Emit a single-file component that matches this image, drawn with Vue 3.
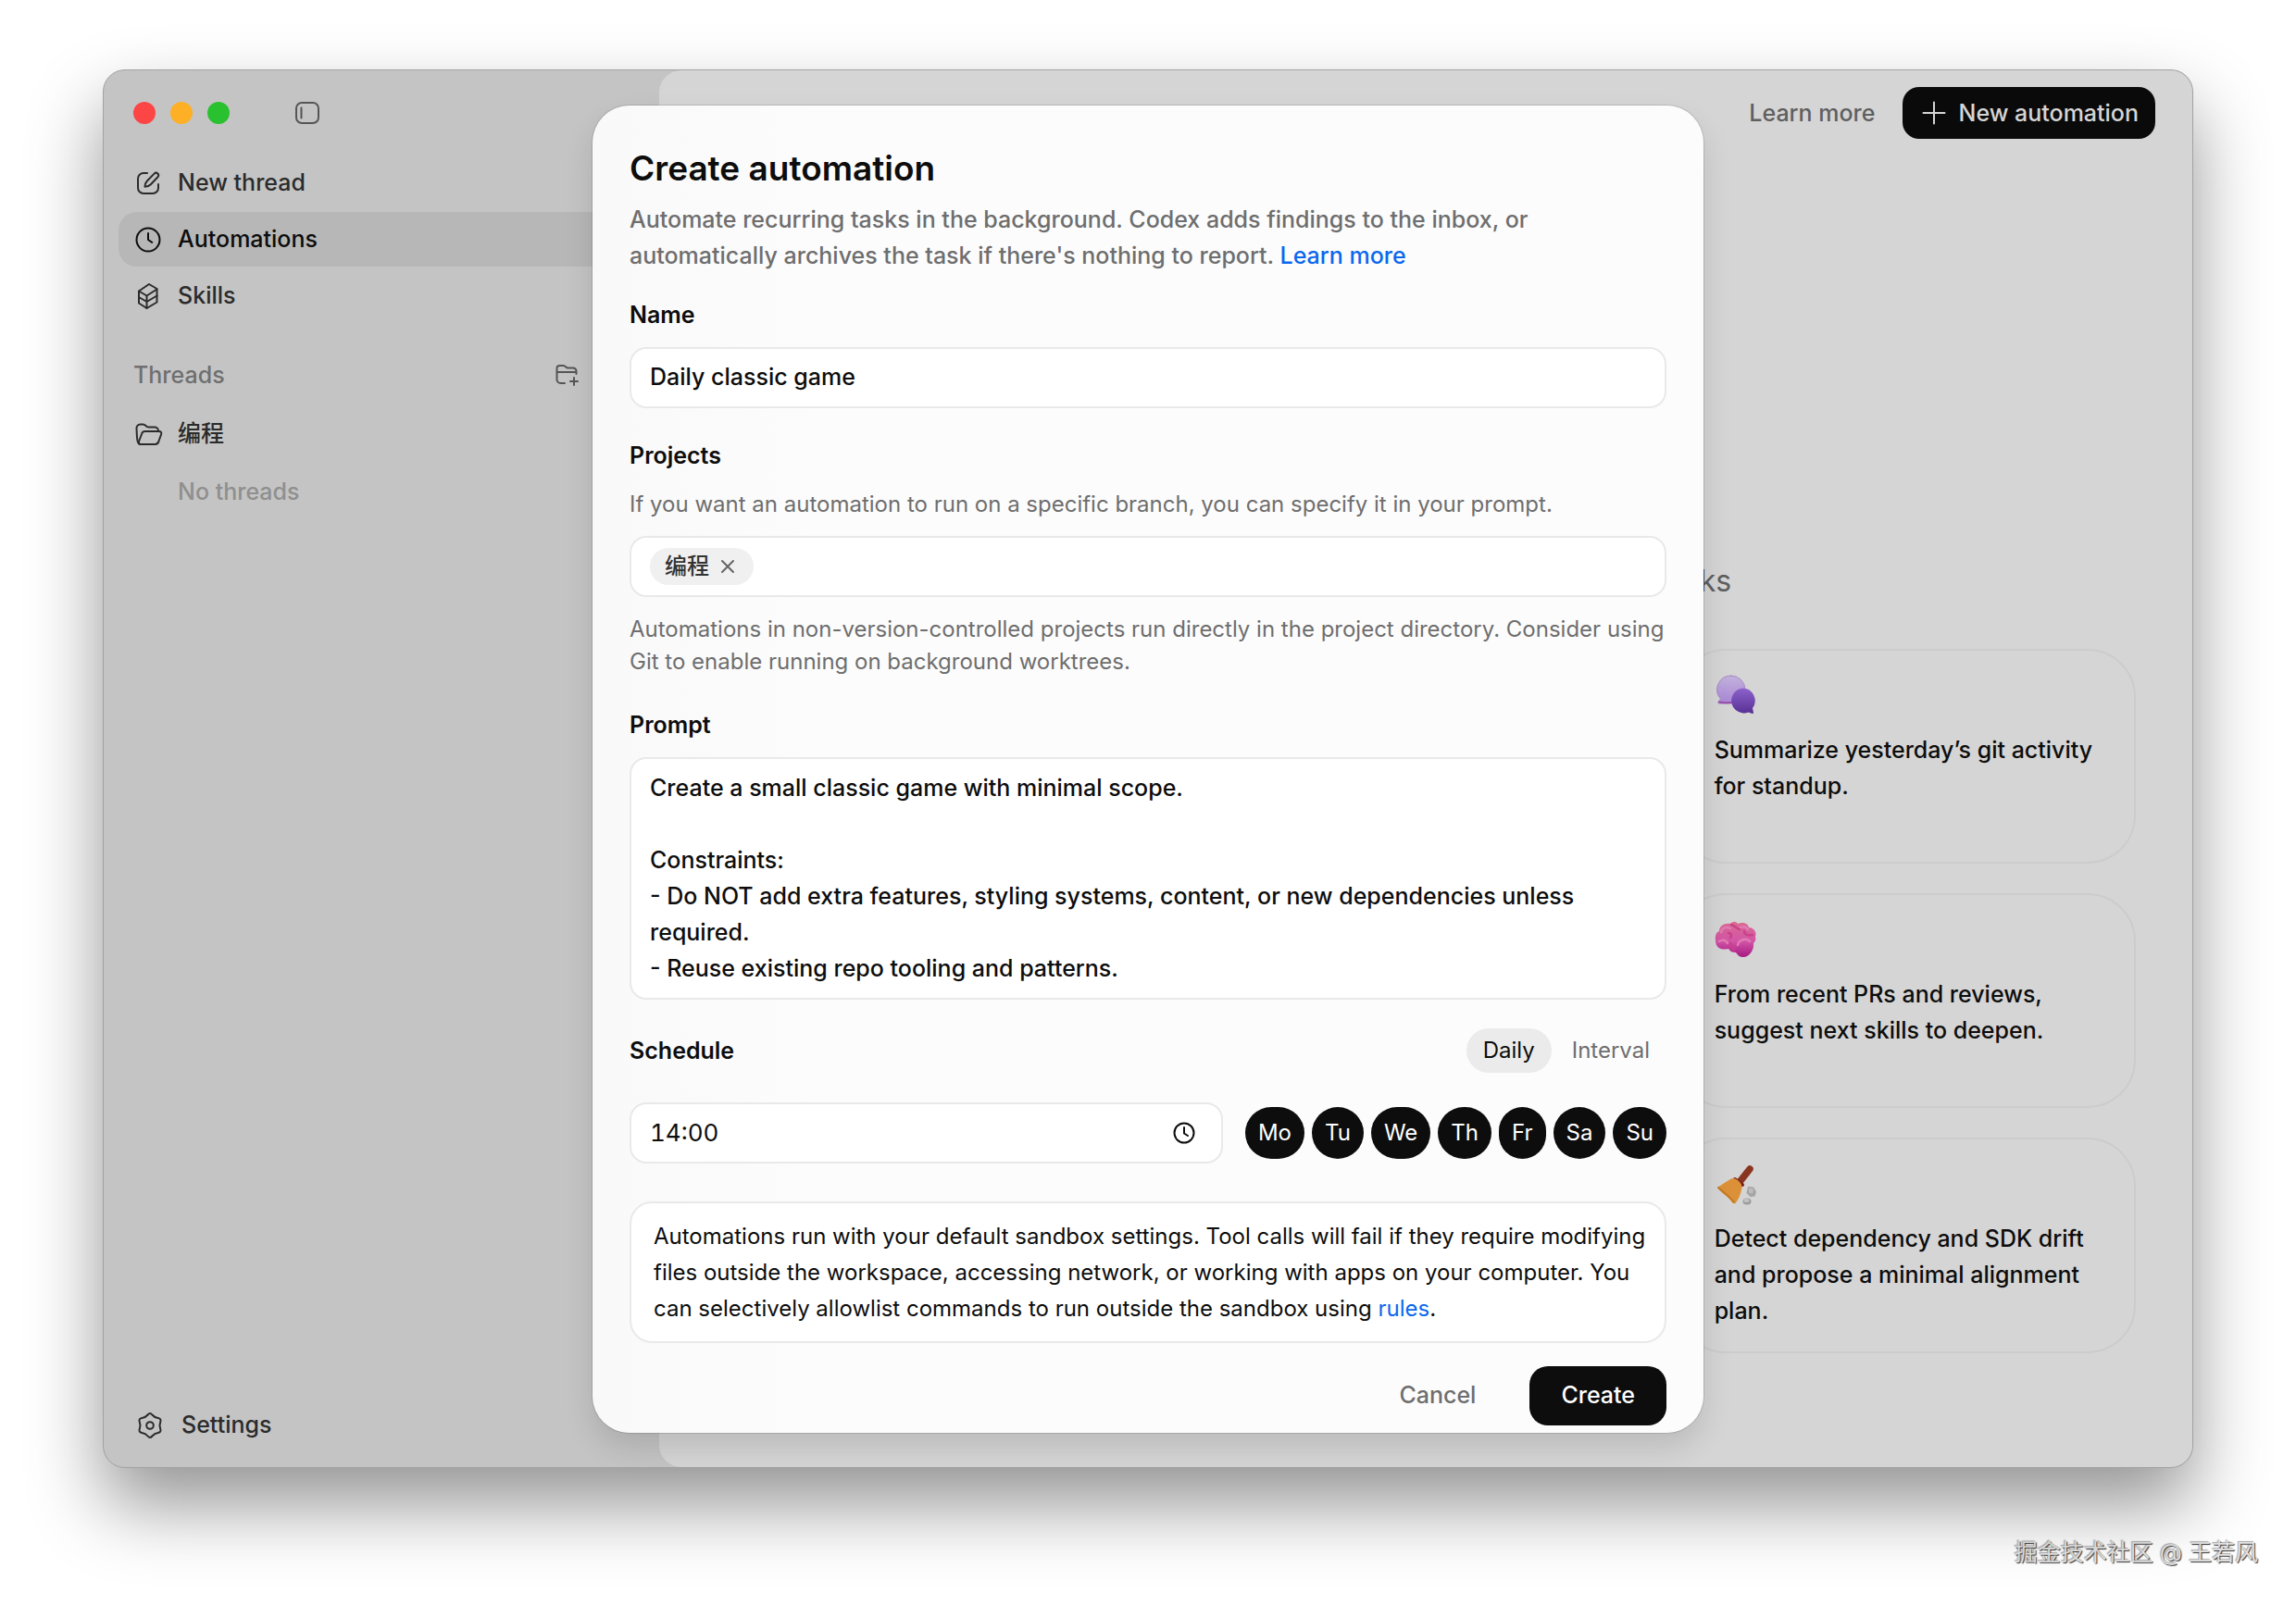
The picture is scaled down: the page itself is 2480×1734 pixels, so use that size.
<template>
  <div class="desktop">
    <div class="window">
      <aside class="sidebar">
        <div class="titlebar">
          <span class="light red"></span>
          <span class="light yellow"></span>
          <span class="light green"></span>
          <button type="button" class="icon-button toggle" aria-label="Toggle sidebar">
            <svg width="28" height="28" viewBox="0 0 28 28">
              <rect x="2" y="3" width="24" height="22" rx="6" />
              <path d="M7.5 8.5v11" />
            </svg>
          </button>
        </div>

        <nav class="menu">
          <a href="#" class="menu-item">
            <svg width="28" height="28" viewBox="0 0 28 28">
              <path d="M13 3H9a6 6 0 0 0-6 6v10a6 6 0 0 0 6 6h10a6 6 0 0 0 6-6v-4" />
              <path d="M20.6 3.6a2.6 2.6 0 0 1 3.8 3.7l-7.6 8c-1.6 1.6-3.4 2.3-6.3 2.5.1-2.9.8-4.7 2.4-6.3z" />
            </svg>
            New thread
          </a>
          <a href="#" class="menu-item active">
            <svg width="28" height="28" viewBox="0 0 28 28">
              <circle cx="14" cy="14" r="12.5" />
              <path d="M14 7v7l4.2 2.8" />
            </svg>
            Automations
          </a>
          <a href="#" class="menu-item">
            <svg width="28" height="28" viewBox="0 0 28 28">
              <path d="M15 1l8.5 5v14.5L12.5 27 4 21.5v-13z" />
              <path d="M4 8.5l8.5 5 11-7M4 15l8.5 5 11-6.5M12.5 13.5V27" />
            </svg>
            Skills
          </a>
        </nav>

        <div class="threads-header">
          <span>Threads</span>
          <button type="button" class="icon-button" aria-label="Add project">
            <svg width="28" height="28" viewBox="0 0 28 28">
              <path d="M12 23H7.5a4 4 0 0 1-4-4V7a3 3 0 0 1 3-3h4c2.5 0 2.5 2.5 5 2.5H21a3.5 3.5 0 0 1 3.5 3.5v3M3.5 11h21" />
              <path d="M22 17v8M18 21h8" />
            </svg>
          </button>
        </div>

        <a href="#" class="menu-item project">
          <svg width="30" height="28" viewBox="0 0 30 28">
            <path d="M6 25C3 25 2.5 22 2 18L1.5 8a4 4 0 0 1 4-4.5h3c3 0 3 3 6 3H21a4 4 0 0 1 4 4v.5" />
            <path d="M6 25h15.5c2 0 3.500-1.200 4-3.500l2.700-7.500c.5-2-.7-3-2.500-3H10.500c-2 0-3 1-3.500 3L4 22c-.4 2 .4 3 2 3z" />
          </svg>
          编程
        </a>
        <p class="no-threads">No threads</p>

        <a href="#" class="menu-item settings">
          <svg width="28" height="28" viewBox="0 0 28 28">
            <path d="M16.4 2.5Q18.9 5.5 22.7 6.1Q26.6 6.7 25.2 10.4Q23.8 14 25.2 17.6Q26.6 21.3 22.7 21.900Q18.900 22.500 16.400 25.500Q14 28.500 11.600 25.500Q9.100 22.500 5.300 21.900Q1.400 21.300 2.800 17.600Q4.200 14 2.800 10.400Q1.400 6.700 5.300 6.100Q9.100 5.500 11.600 2.500Q14 -.5 16.400 2.500z" />
            <circle cx="14" cy="14" r="3.8" />
          </svg>
          Settings
        </a>
      </aside>

      <main class="main">
        <header class="toolbar">
          <a href="#" class="toolbar-link">Learn more</a>
          <button type="button" class="new-automation">
            <svg width="28" height="28" viewBox="0 0 28 28">
              <path d="M14 2.5v23M2.5 14h23" />
            </svg>
            New automation
          </button>
        </header>

        <div class="suggestions">
          <h2>ks</h2>
          <button v-for="item in suggestions" :key="item.icon" type="button" class="suggestion">
            <svg v-if="item.icon === 'chat'" width="48" height="48" viewBox="0 0 48 48">
              <defs>
                <linearGradient id="chat-light" x1="0" y1="0" x2="0" y2="1">
                  <stop offset="0" stop-color="#c3b2dc" />
                  <stop offset="1" stop-color="#a886d6" />
                </linearGradient>
                <linearGradient id="chat-dark" x1="0" y1="0" x2="0" y2="1">
                  <stop offset="0" stop-color="#8d63cb" />
                  <stop offset="1" stop-color="#573095" />
                </linearGradient>
              </defs>
              <path d="M18 3a15 15 0 1 1 0 30H5c-1.5 0-1.5-2 0-3l1.5-2A15 15 0 0 1 18 3z" fill="url(#chat-light)" stroke="#a58cc4" stroke-width="1" />
              <path d="M5 31.5c5 1.5 9 .5 14 .5" fill="none" stroke="#9a4fa8" stroke-width="2" />
              <path d="M30 16.5a13.5 13.5 0 0 1 11 21.5l1 5c0 1.5-2 1-5.5-.5a13.5 13.5 0 1 1-6.500-26z" fill="url(#chat-dark)" />
            </svg>
            <svg v-else-if="item.icon === 'brain'" width="48" height="48" viewBox="0 0 48 48">
              <defs>
                <linearGradient id="brain-fill" x1="0" y1="0" x2="0" y2="1">
                  <stop offset="0" stop-color="#dc6a90" />
                  <stop offset=".55" stop-color="#d354a8" />
                  <stop offset="1" stop-color="#a61a82" />
                </linearGradient>
              </defs>
              <path d="M17 7c3-3 6-3 8 0 5-2 11-1 12 4 5 0 9 5 7 10 1 3 0 5-2 7 1 8-5 15-11 15-4 0-6-2-8-5-4 0-6-1-8-4C7 36 1 33 1 25c-1-5 1-9 4-10 0-6 6-9 12-8z" fill="url(#brain-fill)" />
              <path d="M7 16c1-5 6-6 10-4M26 12c4-3 8-2 10 1M5 26c3-2 7-2 9 2M25 30c1-6 9-8 13-4" fill="none" stroke="#e07db2" stroke-width="2.5" />
              <path d="M18 8c4 1 5 4 9 5M15 17c3 0 4 3 2 5M32 15c0 4 5 5 9 4M17 28c2 2 1 5 4 7" fill="none" stroke="#c74288" stroke-width="2.5" />
            </svg>
            <svg v-else width="48" height="48" viewBox="0 0 48 48">
              <path d="M38 8L27 22" stroke="#8a3520" stroke-width="7.5" fill="none" />
              <path d="M22 19l8 6" stroke="#7a1f18" stroke-width="4" fill="none" />
              <path d="M17 19c3-2 5-1 8 1 3 3 5 5 4.5 9-1.5 6-3 11-7 16-2 1-4-1-5-3-3-4-8-7-13-12-1-1-1-2 0-3 4-3 8-5 12.5-8z" fill="#dc9138" />
              <path d="M4 28c5 5 11 8 17 16" stroke="#c47a26" stroke-width="2" fill="none" />
              <path d="M36 27l6 .5 3 5-1.5 5-5 .5-4-4z" fill="#a5a5a5" />
              <path d="M37 28.5l5 1-1 5-4-1z" fill="#bdbdbd" />
              <ellipse cx="35" cy="43" rx="4.5" ry="3.5" fill="#9c9c9c" />
              <ellipse cx="34.5" cy="42" rx="3" ry="2" fill="#c2c2c2" />
            </svg>
            <span>{{ item.text }}</span>
          </button>
        </div>
      </main>

      <div class="overlay">
        <form class="modal" role="dialog" aria-labelledby="modal-title" @submit.prevent>
          <h1 id="modal-title">Create automation</h1>
          <p class="description">
            Automate recurring tasks in the background. Codex adds findings to the inbox, or
            automatically archives the task if there's nothing to report. <a href="#">Learn more</a>
          </p>

          <div class="field">
            <label for="name">Name</label>
            <input id="name" v-model="name" type="text" class="box" />
          </div>

          <div class="field">
            <label for="projects">Projects</label>
            <p class="hint">If you want an automation to run on a specific branch, you can specify it in your prompt.</p>
            <div class="box projects">
              <span v-for="project in projects" :key="project" class="chip">
                {{ project }}
                <button type="button" :aria-label="'Remove ' + project" @click="removeProject(project)">
                  <svg width="16" height="16" viewBox="0 0 16 16">
                    <path d="M2 2l12 12M14 2L2 14" />
                  </svg>
                </button>
              </span>
              <input id="projects" type="text" />
            </div>
            <p class="hint">
              Automations in non-version-controlled projects run directly in the project directory. Consider using
              Git to enable running on background worktrees.
            </p>
          </div>

          <div class="field">
            <label for="prompt">Prompt</label>
            <textarea id="prompt" v-model="prompt" class="box" rows="6"></textarea>
          </div>

          <div class="schedule-header">
            <label for="time">Schedule</label>
            <div class="modes">
              <button
                v-for="option in ['Daily', 'Interval']"
                :key="option"
                type="button"
                :class="{ selected: mode === option }"
                @click="mode = option"
              >{{ option }}</button>
            </div>
          </div>

          <div class="schedule">
            <div class="box time">
              <input id="time" v-model="time" type="text" />
              <svg width="24" height="26" viewBox="0 0 24 26">
                <circle cx="12" cy="13" r="10.5" />
                <path d="M12 7v6.5l4 2.5" />
              </svg>
            </div>
            <div class="days">
              <button v-for="day in days" :key="day" type="button">{{ day }}</button>
            </div>
          </div>

          <p class="box sandbox">
            Automations run with your default sandbox settings. Tool calls will fail if they require modifying
            files outside the workspace, accessing network, or working with apps on your computer. You
            can selectively allowlist commands to run outside the sandbox using <a href="#">rules</a>.
          </p>

          <div class="actions">
            <button type="button" class="cancel">Cancel</button>
            <button type="submit" class="create">Create</button>
          </div>
        </form>
      </div>
    </div>

    <p class="credit">掘金技术社区 @ 王若风</p>
  </div>
</template>

<script setup>
import { ref } from 'vue'

const name = ref('Daily classic game')
const projects = ref(['编程'])
const prompt = ref(`Create a small classic game with minimal scope.

Constraints:
- Do NOT add extra features, styling systems, content, or new dependencies unless required.
- Reuse existing repo tooling and patterns.`)
const mode = ref('Daily')
const time = ref('14:00')
const days = ['Mo', 'Tu', 'We', 'Th', 'Fr', 'Sa', 'Su']

const suggestions = [
  { icon: 'chat', text: 'Summarize yesterday’s git activity for standup.' },
  { icon: 'brain', text: 'From recent PRs and reviews, suggest next skills to deepen.' },
  { icon: 'broom', text: 'Detect dependency and SDK drift and propose a minimal alignment plan.' }
]

const removeProject = (project) => {
  projects.value = projects.value.filter((p) => p !== project)
}
</script>

<style>
body {
  margin: 0;
  background: #fff;
}
</style>

<style scoped>
* {
  box-sizing: border-box;
}

.desktop {
  display: flex;
  flex-direction: column;
  min-height: 100vh;
  padding-top: 75px;
  overflow: hidden;
  font-family: Inter, "Noto Sans CJK SC", sans-serif;
  font-size: 25px;
  font-weight: 450;
  line-height: 39px;
  color: #0d0d0d;
}

h1, h2, p {
  margin: 0;
}

a {
  color: #0b67ee;
  text-decoration: none;
}

button, input, textarea {
  font: inherit;
  color: inherit;
  border: none;
  background: none;
  padding: 0;
  margin: 0;
  outline: none;
}

svg {
  flex: none;
  fill: none;
  stroke: currentColor;
  stroke-width: 2;
  stroke-linecap: round;
  stroke-linejoin: round;
}

.window {
  position: relative;
  flex: 1;
  display: flex;
  margin: 0 111px;
  border: 1px solid #a2a2a2;
  border-radius: 24px;
  background: #c4c4c4;
  box-shadow: 0 40px 80px rgba(0, 0, 0, 0.42);
}

.sidebar {
  display: flex;
  flex-direction: column;
  width: 600px;
  padding: 0 16px 16px;
  color: #2b2b2b;
}

.titlebar {
  display: flex;
  align-items: center;
  gap: 16px;
  height: 92px;
  padding-left: 16px;
}

.light {
  width: 24px;
  height: 24px;
  border-radius: 50%;
}

.red {
  background: #fc4645;
}

.yellow {
  background: #fdb025;
}

.green {
  background: #2ac131;
}

.icon-button {
  display: flex;
  color: #555;
}

.toggle {
  margin-left: 54px;
}

.menu {
  display: flex;
  flex-direction: column;
  gap: 2px;
}

.menu-item {
  display: flex;
  align-items: center;
  gap: 18px;
  height: 59px;
  padding: 0 18px;
  border-radius: 20px;
  color: #2b2b2b;
}

.menu-item.active {
  background: #b7b7b7;
  color: #0d0d0d;
}

.threads-header {
  display: flex;
  align-items: center;
  justify-content: space-between;
  margin-top: 36px;
  height: 40px;
  padding: 0 70px 0 16px;
  color: #6f6f6f;
}

.project {
  margin-top: 14px;
  gap: 16px;
}

.no-threads {
  margin-top: 14px;
  padding-left: 64px;
  color: #8f8f8f;
}

.settings {
  margin-top: auto;
  padding-left: 20px;
  gap: 20px;
}

.main {
  flex: 1;
  border-radius: 24px;
  background: #d5d5d5;
}

.toolbar {
  display: flex;
  align-items: center;
  justify-content: flex-end;
  gap: 30px;
  padding: 18px 40px 0;
}

.toolbar-link {
  color: #5f5f5f;
}

.new-automation {
  display: flex;
  align-items: center;
  gap: 12px;
  height: 56px;
  padding: 0 18px 0 20px;
  border-radius: 18px;
  background: #0a0a0a;
  color: #d5d5d5;
}

/* the dialog covers the first two columns */
.suggestions {
  display: grid;
  grid-template-columns: repeat(3, 1fr);
  column-gap: 24px;
  row-gap: 32px;
  margin-top: 454px;
  padding: 0 61px;
}

.suggestions h2 {
  grid-column: 3;
  padding-left: 24px;
  margin-bottom: 17px;
  font-size: 32px;
  line-height: 48px;
  font-weight: 400;
  color: #5f5f5f;
}

.suggestion {
  grid-column: 3;
  display: flex;
  flex-direction: column;
  gap: 16px;
  min-height: 232px;
  padding: 24px 24px 24px 38px;
  border: 2px solid #cccccc;
  border-radius: 52px;
  text-align: left;
}

.suggestion svg {
  stroke: none;
}

.overlay {
  position: absolute;
  inset: 0;
  display: flex;
  align-items: center;
  justify-content: center;
}

.modal {
  display: flex;
  flex-direction: column;
  width: 1200px;
  padding: 44px 40px 8px;
  border-radius: 40px;
  background: linear-gradient(90deg, #f9f9f9, #fcfcfc 20%);
  box-shadow: 0 0 0 1px rgba(0, 0, 0, 0.12), 0 16px 32px rgba(0, 0, 0, 0.12);
}

h1 {
  font-size: 37px;
  line-height: 48px;
  font-weight: 600;
}

.description {
  margin-top: 12px;
  color: #6e6e6e;
}

.field {
  display: flex;
  flex-direction: column;
  margin-top: 33px;
}

.description + .field {
  margin-top: 26px;
}

label {
  font-weight: 600;
  line-height: 36px;
}

.box {
  min-height: 66px;
  margin-top: 17px;
  padding: 0 20px;
  border: 2px solid #e9e9e9;
  border-radius: 18px;
  background: #fff;
}

.hint {
  margin-top: 17px;
  font-size: 24px;
  font-weight: 400;
  line-height: 35px;
  color: #6e6e6e;
}

.projects {
  display: flex;
  align-items: center;
  gap: 12px;
}

.projects input {
  flex: 1;
}

.chip {
  display: flex;
  align-items: center;
  gap: 12px;
  height: 40px;
  padding: 0 20px 0 16px;
  border-radius: 20px;
  background: #f0f0f0;
  font-size: 24px;
  color: #333;
}

.chip button {
  display: flex;
  color: #666;
}

textarea.box {
  display: block;
  width: 100%;
  padding: 12px 20px;
  resize: none;
  overflow: hidden;
}

.schedule-header {
  display: flex;
  align-items: center;
  justify-content: space-between;
  margin-top: 31px;
}

.modes {
  display: flex;
  gap: 4px;
}

.modes button {
  height: 48px;
  padding: 0 18px;
  border-radius: 24px;
  font-size: 24px;
  font-weight: 400;
  color: #6e6e6e;
}

.modes .selected {
  background: #ebebeb;
  color: #0d0d0d;
}

.schedule {
  display: flex;
  align-items: center;
  gap: 24px;
  margin-top: 32px;
}

.time {
  flex: 1;
  display: flex;
  align-items: center;
  margin-top: 0;
  padding-right: 28px;
}

.time input {
  flex: 1;
  min-width: 0;
  font-size: 26px;
  font-weight: 400;
  font-variant-numeric: tabular-nums;
}

.days {
  display: flex;
  gap: 8px;
}

.days button {
  height: 56px;
  padding: 0 14px;
  border-radius: 28px;
  background: #0d0d0d;
  color: #fff;
  font-size: 24px;
  font-weight: 400;
}

.sandbox {
  margin-top: 41px;
  padding: 16px 12px 16px 24px;
  border-radius: 24px;
  font-size: 24px;
  font-weight: 400;
}

.actions {
  display: flex;
  justify-content: flex-end;
  gap: 24px;
  margin-top: 25px;
}

.actions button {
  height: 64px;
  padding: 0 34px;
  border-radius: 20px;
}

.cancel {
  color: #6e6e6e;
}

.actions .create {
  background: #0d0d0d;
  color: #fff;
}

.credit {
  align-self: flex-end;
  margin-top: 72px;
  padding: 0 41px 37px 0;
  font-size: 25px;
  font-weight: 400;
  color: #e2e2e2;
  text-shadow: 1px 1px 1px #333, -1px -1px 1px #aaa;
}
</style>
